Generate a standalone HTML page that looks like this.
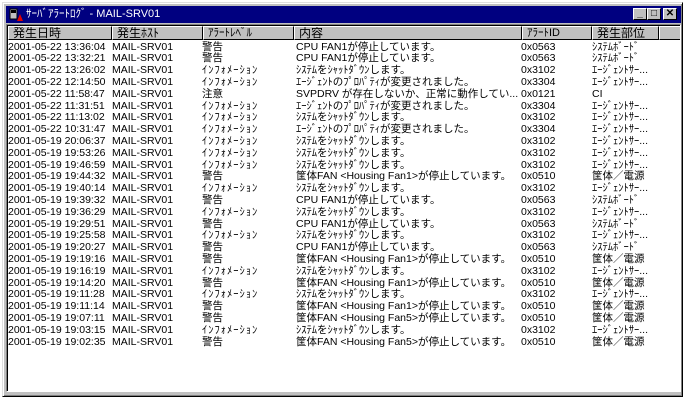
<!DOCTYPE html>
<html><head><meta charset="utf-8"><style>
*{margin:0;padding:0;box-sizing:border-box}
body{width:685px;height:400px;background:#fff;overflow:hidden;position:relative;font-family:"Liberation Sans","Noto Sans CJK JP",sans-serif}
.win{position:absolute;left:2px;top:2px;width:681px;height:395px;background:#c0c0c0;border:1px solid;border-color:#dfdfdf #000 #000 #dfdfdf;box-shadow:inset 1px 1px #fff,inset -1px -1px #808080}
.title{position:absolute;left:3px;top:3px;width:675px;height:17px;background:#000080;color:#fff;font-size:11px;line-height:17px;padding-left:20px}
.ico{position:absolute;left:3px;top:2px;width:14px;height:14px}
.btn{position:absolute;top:2px;width:14px;height:12px;background:#c0c0c0;border:1px solid;border-color:#fff #000 #000 #fff;color:#000;font-size:10px;line-height:10px;text-align:center;font-weight:bold}
.client{position:absolute;left:3px;top:21px;width:675px;height:368px;background:#fff;border:1px solid;border-color:#808080 #fff #fff #808080;box-shadow:inset 1px 1px #000;overflow:hidden}
.hdr{position:absolute;left:1px;top:1px;height:14px;width:700px;background:#c0c0c0}
.h{position:absolute;top:0;height:14px;border:1px solid;border-color:#fff #000 #000 #fff;font-size:12px;line-height:12px;padding-left:4px;color:#000;white-space:nowrap;overflow:hidden}
.row{position:absolute;left:0;height:12px;font-size:10.5px;line-height:12px;color:#000;white-space:nowrap}
.row span{position:absolute;top:0}
</style></head><body>
<div class="win">
<div class="title"><svg class="ico" viewBox="0 0 14 14"><rect x="1" y="1" width="7" height="10" fill="#c0c0c0" stroke="#000"/><rect x="2" y="2" width="5" height="3" fill="#000"/><path d="M8 13 L11 6 L14 13Z" fill="#e00000"/></svg>ｻｰﾊﾞｱﾗｰﾄﾛｸﾞ - MAIL-SRV01
<div class="btn" style="left:627px">_</div><div class="btn" style="left:641px">□</div><div class="btn" style="left:657px">✕</div>
</div>
<div class="client">
<div class="hdr">
<div class="h" style="left:0;width:104px">発生日時</div>
<div class="h" style="left:104px;width:91px">発生ﾎｽﾄ</div>
<div class="h" style="left:195px;width:91px;font-size:11px">ｱﾗｰﾄﾚﾍﾞﾙ</div>
<div class="h" style="left:286px;width:228px">内容</div>
<div class="h" style="left:514px;width:70px;font-size:11px">ｱﾗｰﾄID</div>
<div class="h" style="left:584px;width:67px">発生部位</div>
<div class="h" style="left:651px;width:40px"></div>
</div>
<div id="rows"></div>
</div>
</div>
<script>
var W='警告',I='<i style="font-style:normal;letter-spacing:1px">ｲﾝﾌｫﾒｰｼｮﾝ</i>',CF='CPU FAN1が停止しています。',SD='ｼｽﾃﾑをｼｬｯﾄﾀﾞｳﾝします。',PR='ｴｰｼﾞｪﾝﾄのﾌﾟﾛﾊﾟﾃｨが変更されました。',SB='ｼｽﾃﾑﾎﾞｰﾄﾞ',AG='ｴｰｼﾞｪﾝﾄｻｰ...',F1='筐体FAN &lt;Housing Fan1&gt;が停止しています。',F5='筐体FAN &lt;Housing Fan5&gt;が停止しています。',KD='筐体／電源';
var d=[
['2001-05-22 13:36:04',W,CF,'0x0563',SB],['2001-05-22 13:32:21',W,CF,'0x0563',SB],['2001-05-22 13:26:02',I,SD,'0x3102',AG],['2001-05-22 12:14:50',I,PR,'0x3304',AG],
['2001-05-22 11:58:47','注意','SVPDRV が存在しないか、正常に動作してい...','0x0121','CI'],['2001-05-22 11:31:51',I,PR,'0x3304',AG],['2001-05-22 11:13:02',I,SD,'0x3102',AG],['2001-05-22 10:31:47',I,PR,'0x3304',AG],
['2001-05-19 20:06:37',I,SD,'0x3102',AG],['2001-05-19 19:53:26',I,SD,'0x3102',AG],['2001-05-19 19:46:59',I,SD,'0x3102',AG],['2001-05-19 19:44:32',W,F1,'0x0510',KD],
['2001-05-19 19:40:14',I,SD,'0x3102',AG],['2001-05-19 19:39:32',W,CF,'0x0563',SB],['2001-05-19 19:36:29',I,SD,'0x3102',AG],['2001-05-19 19:29:51',W,CF,'0x0563',SB],
['2001-05-19 19:25:58',I,SD,'0x3102',AG],['2001-05-19 19:20:27',W,CF,'0x0563',SB],['2001-05-19 19:19:16',W,F1,'0x0510',KD],['2001-05-19 19:16:19',I,SD,'0x3102',AG],
['2001-05-19 19:14:20',W,F1,'0x0510',KD],['2001-05-19 19:11:28',I,SD,'0x3102',AG],['2001-05-19 19:11:14',W,F1,'0x0510',KD],['2001-05-19 19:07:11',W,F5,'0x0510',KD],
['2001-05-19 19:03:15',I,SD,'0x3102',AG],['2001-05-19 19:02:35',W,F5,'0x0510',KD]];
var x=[1,105,195,289,514,585],h='';
d.forEach(function(r,i){h+='<div class="row" style="top:'+(15.5+i*11.8).toFixed(1)+'px;width:680px">';r.splice(1,0,'MAIL-SRV01');r.forEach(function(c,j){h+='<span style="left:'+x[j]+'px">'+c+'</span>'});h+='</div>'});
document.getElementById('rows').innerHTML=h;
</script>
</body></html>
